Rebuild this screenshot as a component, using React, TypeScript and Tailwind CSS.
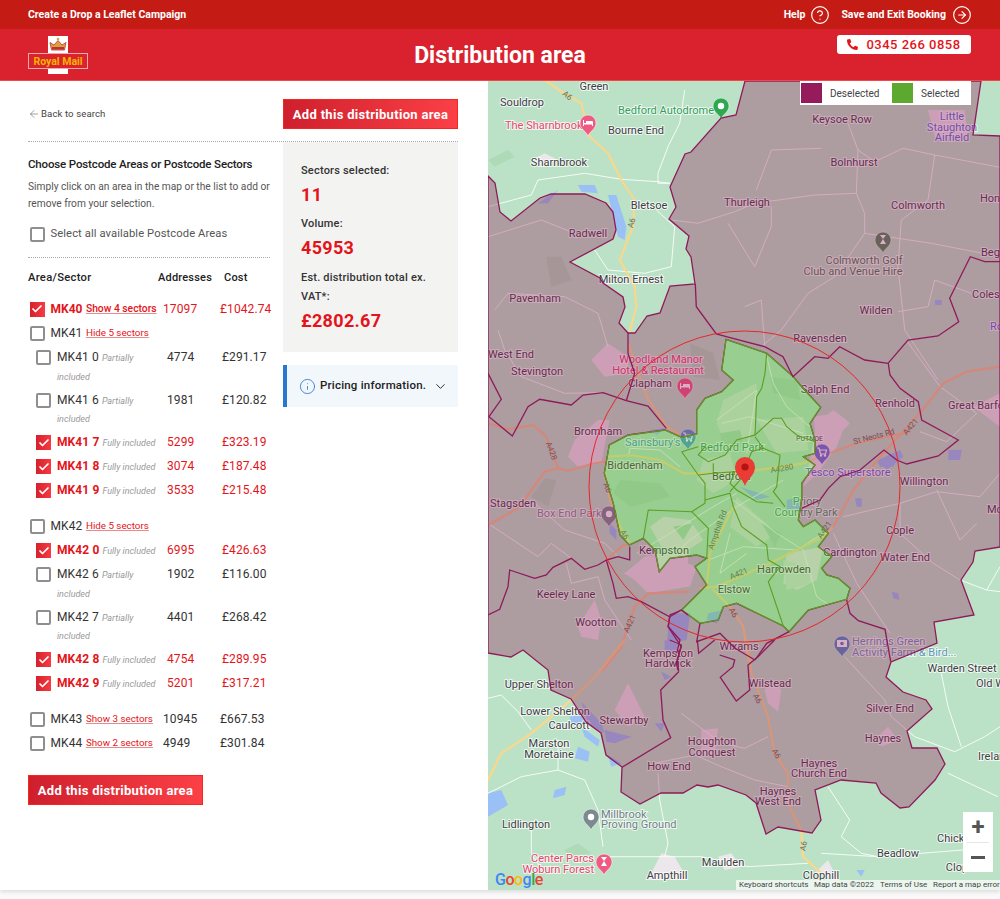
import React from "react";
import { ArrowLeft, Check, ChevronDown, CircleArrowRight, CircleHelp, Info } from "lucide-react";
import { FaPhoneAlt } from "react-icons/fa";

// map shapes were traced off crops at 3x, each crop has its own origin
type Origin = [number, number];
const Z5: Origin = [570, 320];
const Z6: Origin = [488, 80];
const Z7: Origin = [488, 640];
const Z9: Origin = [488, 330];
const Z10: Origin = [800, 300];

const pts = (o: Origin, s: string) =>
  s
    .trim()
    .split(/\s+/)
    .map((p) => {
      const [x, y] = p.split(",").map(Number);
      return `${(o[0] + x / 3).toFixed(1)},${(o[1] + y / 3).toFixed(1)}`;
    })
    .join(" ");

const path = (o: Origin, s: string) => "M" + pts(o, s).split(" ").join(" L");

const outerArea =
  "745,81 736,115 721,118 691,152 685,154 670,187 676,207 669,219 689,236 686,249 691,257 695,284 670,286 660,313 647,316 635,333 628,333 619,323 625,307 623,297 603,283 600,278 570,262 613,239 616,230 613,212 606,203 585,194 551,194 540,198 511,221 500,212 495,183 488,176 488,653 511,657 523,650 548,670 551,690 571,699 586,722 601,733 606,755 622,767 621,792 640,804 661,793 683,793 697,785 708,787 718,785 746,795 756,803 766,834 778,827 812,833 821,820 815,790 841,780 876,783 881,793 900,808 909,807 935,780 945,764 937,748 912,748 907,731 932,709 926,700 903,692 886,677 891,662 937,643 934,622 974,615 961,580 973,562 975,551 1000,547 1000,136 973,135 981,81";

const selectedArea = pts(
  Z5,
  "468,58 590,100 670,170 695,200 752,262 720,310 735,360 735,400 700,410 735,435 695,490 695,540 685,600 700,620 735,600 775,640 745,680 785,710 755,745 770,765 805,775 840,805 830,838 715,870 657,935 640,918 500,850 460,860 445,900 390,910 335,870 410,795 375,740 410,715 380,705 300,715 268,755 255,690 220,655 178,675 150,645 130,550 103,460 118,375 175,345 285,330 335,352 380,342 380,270 405,235 455,215 490,180 455,150"
);

const sectorLines = [
  "590,100 585,160 575,205 560,230 555,345 500,360 465,405 415,425 385,405 405,380",
  "555,345 610,295 635,295 650,320 680,345 735,365",
  "555,350 580,385 630,405 620,500 610,515 645,560",
  "335,395 385,465 405,490 405,550 365,575 235,570 220,655",
  "365,575 415,625 410,715",
  "335,395 385,380",
  "385,465 430,460 495,455 480,490 500,510 560,545 610,550",
  "430,430 430,460",
  "405,540 480,520 490,560 515,620 590,675 595,720 630,740 595,785 640,918",
  "480,515 510,480 545,395 580,385",
];

const districtLines: [Origin, string][] = [
  [Z6, "622,612 625,680 685,762 715,770 830,800 885,830 915,890 980,830 1020,835 1055,800 1130,840 1200,850 1260,780 1350,768 1412,725 1385,655 1447,530 1490,545 1536,545"],
  [Z10, "265,190 270,225 300,265 355,305 365,360 475,420 415,468 320,492 290,480 252,450 180,510 120,530 85,565 60,600 5,625"],
  [Z10, "140,900 150,940 175,962 255,988 272,1085"],
  [Z9, "0,130 40,208 3,260 73,318 120,230 155,208 250,225 285,195 345,188 415,212 480,228 535,295"],
  [Z9, "420,10 420,70 440,130 415,212"],
  [Z9, "425,650 425,690 390,680 355,690 330,705 290,718 250,685 195,712 175,735 140,745 65,720 60,770 35,838 0,855"],
  [Z9, "355,690 375,760 385,805 420,800 460,815 545,860 580,840 600,855"],
  [Z9, "545,860 540,890 580,950 565,1000 570,1020"],
  [Z7, "572,95 518,150 525,240 548,293 402,382"],
  [Z7, "572,95 568,60 580,15 545,0"],
  [Z7, "628,0 632,40 680,0"],
  [Z7, "695,45 740,60 735,80 697,112 745,183 785,150 780,75 810,50 860,0"],
  [Z5, "335,870 300,885 295,920 330,960 320,1000"],
  [Z5, "390,910 380,965 450,940 470,960 495,985 555,1020"],
  [Z5, "657,935 590,970 555,1020"],
];

const minorRoads: [Origin, string][] = [
  [Z6, "590,30 575,130 540,200 510,280 510,310 545,310"],
  [Z6, "290,280 400,298 510,305 545,310"],
  [Z6, "0,380 130,345 150,300 290,280"],
  [Z6, "320,510 360,570 470,580 550,560 560,440 505,390"],
  [Z6, "550,420 630,430 740,395 800,370 980,345 1105,340 1130,400 1130,460 1040,590 960,640 880,750 820,800"],
  [Z6, "1080,130 1110,210 1105,340"],
  [Z6, "1110,210 1160,245 1245,205 1340,225 1536,262"],
  [Z6, "805,330 850,210 1000,205"],
  [Z6, "850,380 850,440 800,560 720,430"],
  [Z6, "1340,225 1320,360 1240,420 1230,560 1250,750 1350,900"],
  [Z6, "1130,460 1330,490 1536,530"],
  [Z6, "1230,695 1320,680 1340,600 1450,640"],
  [Z6, "0,470 160,420 260,460"],
  [Z6, "20,690 60,640 230,650 330,700 360,800"],
  [Z6, "770,680 820,660 830,800"],
  [Z9, "30,0 50,60 100,140 230,190 345,188"],
  [Z9, "140,520 230,600 350,640 390,680"],
  [Z9, "0,580 150,680 190,640 250,685"],
  [Z9, "235,700 250,760 330,740 350,810 430,930"],
  [Z7, "0,175 40,165 90,215 130,270"],
  [Z7, "210,300 210,390 290,420 330,510 345,620"],
  [Z7, "0,460 100,410 210,390"],
  [Z7, "130,560 130,640 170,700"],
  [Z7, "350,650 450,650 640,650 780,680 960,670"],
  [Z7, "510,400 515,480 540,610 530,650"],
  [Z7, "580,220 700,310 770,325 840,290"],
  [Z7, "500,370 620,345 700,380 800,420 900,440"],
  [Z7, "1020,440 1085,540 1060,590 1120,640 1170,650"],
  [Z7, "1000,640 1170,650 1425,630"],
  [Z7, "1210,230 1280,290 1400,335 1490,290 1536,260"],
  [Z7, "1380,400 1530,470"],
  [Z7, "1360,100 1380,200 1420,320"],
  [Z7, "1070,50 1190,180 1210,230"],
  [Z10, "480,840 560,870 600,875"],
  [Z10, "560,870 600,800"],
  [Z10, "300,610 410,575 540,590 600,520"],
  [Z10, "130,650 300,610"],
  [Z10, "100,700 170,850 270,1000"],
  [Z10, "300,610 300,700 400,790 480,840"],
  [Z10, "320,122 420,260 530,340 440,425 360,395"],
  [Z10, "410,570 480,720 530,670"],
  [Z5, "200,700 300,640 430,560 500,520"],
  [Z5, "300,715 360,660 500,560 640,480"],
  [Z5, "415,720 520,680 680,690 760,640"],
  [Z5, "490,540 620,640 700,690 740,830 770,850"],
  [Z5, "455,310 540,290 700,340"],
  [Z5, "590,110 610,190 650,260 720,320"],
  [Z5, "440,300 560,210 530,400"],
  [Z5, "480,640 450,760 530,700"],
  [Z5, "175,410 180,385 270,390 330,440"],
];

const majorRoads: [string, Origin, string][] = [
  ["#fbd78a", Z6, "170,0 220,35 280,70 305,170 360,220 400,300 440,360 435,440 395,540 440,620 445,680 425,755"],
  ["#fbd78a", Z5, "175,70 230,230 290,320 340,350"],
  ["#f7c28a", Z9, "0,280 60,298 135,285 175,320 210,415 240,422 310,402 365,392"],
  ["#f7c28a", Z9, "210,415 170,425 120,495 90,535 0,585"],
  ["#fbe08c", Z5, "118,410 180,405 270,420 340,460 500,460 700,430 750,410"],
  ["#f7c28a", Z5, "750,410 860,370 1020,335"],
  ["#fbe08c", Z5, "105,455 120,540 150,620 178,670"],
  ["#f7c28a", Z9, "345,1020 400,950 440,830 480,790 600,785"],
  ["#fbe08c", Z5, "390,805 440,800 600,730 760,650 790,620"],
  ["#f7c28a", Z10, "100,680 160,570 250,460 360,340 430,250 500,215 600,200"],
  ["#fbe08c", Z5, "430,810 480,860 520,920 535,1020"],
  ["#fbd78a", Z7, "780,0 790,100 840,230 860,340 900,400 900,490 940,570 945,650 1000,700"],
  ["#fbd78a", Z7, "0,420 40,340 130,280 250,180 330,100 410,0"],
  ["#fbe08c", Z5, "410,800 420,700 490,560"],
  ["#f7c28a", Z9, "355,690 400,650 425,640"],
];

const urban: [Origin, string][] = [
  [Z9, "410,730 470,680 600,660 600,770 480,790 440,750"],
  [Z9, "240,380 260,330 330,270 365,270 340,400 270,410"],
  [Z9, "310,90 360,40 420,80 420,130 350,140"],
  [Z9, "270,890 320,810 340,870 330,930 280,920"],
  [Z5, "700,500 720,420 740,310 790,270 830,300 800,380 750,450"],
  [Z5, "240,620 280,590 360,600 400,660 340,700 280,690"],
  [Z5, "650,700 760,680 740,780 680,810 640,790"],
  [Z5, "160,760 300,710 380,740 360,800 240,790"],
  [Z6, "1320,90 1430,90 1440,170 1340,170"],
  [Z6, "130,240 170,220 210,240 160,260"],
  [Z10, "40,350 110,340 150,370 100,420 50,420"],
  [Z10, "520,320 600,280 600,380 560,350"],
  [Z7, "420,130 450,190 470,230 420,260 380,210"],
  [Z7, "640,270 690,265 680,350 640,340"],
  [Z7, "830,150 850,120 880,150 870,215 840,190"],
  [Z7, "1170,290 1200,260 1230,300 1180,320"],
  [Z7, "480,720 520,640 560,650 600,720"],
  [Z7, "690,650 730,640 760,680 710,690"],
  [Z7, "980,700 1020,660 1050,720"],
];

// paler ground inside the selected sectors, town showing through
const townInSelection: [Origin, string][] = [
  [Z5, "460,240 560,190 555,340 470,380 440,310"],
  [Z5, "400,420 480,400 500,480 430,520 380,480"],
  [Z5, "500,530 620,640 560,680 480,620"],
  [Z5, "560,300 700,290 715,390 620,400"],
  [Z5, "640,720 720,740 720,790 650,810"],
];

const darkPatches: [Origin, string][] = [
  [Z9, "130,500 170,445 205,450 180,530"],
  [Z5, "150,480 270,490 300,530 180,560 130,520"],
  [Z5, "450,340 510,330 520,370 460,390"],
  [Z5, "600,170 680,180 690,240 610,220"],
  [Z5, "310,620 370,610 340,660"],
  [Z5, "575,610 635,640 615,680"],
  [Z5, "360,70 430,100 450,180 370,170"],
  [Z6, "175,530 220,530 250,600 190,620"],
  [Z6, "0,240 60,210 80,230 20,260"],
  [Z7, "230,630 270,610 310,640 240,650"],
];

const water: [Origin, string][] = [
  [Z6, "270,315 320,315 330,340 280,335"],
  [Z6, "360,345 385,345 415,440 410,480 390,470"],
  [Z6, "150,370 210,330 180,370"],
  [Z7, "245,230 280,225 290,250 250,250"],
  [Z7, "280,260 335,300 330,320 290,290"],
  [Z7, "270,320 305,335 300,365 260,355"],
  [Z7, "280,185 340,250 350,280 300,250"],
  [Z7, "350,270 430,290 380,310 355,305"],
  [Z7, "360,345 400,370 370,380"],
  [Z7, "520,95 550,110 530,120"],
  [Z7, "500,250 530,250 520,275"],
  [Z7, "530,0 575,15 560,40 530,30"],
  [Z7, "0,460 40,450 60,495 0,530"],
  [Z7, "200,450 235,440 230,465 195,475"],
  [Z7, "1105,690 1130,690 1120,710"],
  [Z10, "235,480 300,450 310,470 260,510"],
  [Z10, "445,450 485,450 480,480 445,480"],
  [Z10, "275,875 295,880 298,900 280,895"],
  [Z10, "165,595 185,595 185,620 170,620"],
  [Z10, "405,0 425,0 425,15 405,15"],
  [Z9, "365,580 385,600 385,630 365,610"],
  [Z5, "650,540 690,530 690,580 650,570"],
  [Z5, "510,500 600,530 560,540"],
  [Z5, "240,330 285,325 260,345"],
  [Z5, "415,880 460,870 440,910 410,900"],
  [Z5, "920,420 980,420 970,440 930,440"],
  [Z5, "300,880 360,880 350,960 290,970"],
];

type Lbl = [string, number, number, string?, ("start" | "end" | "middle")?, number?];
const INK = "#3c4043";
const PINK = "#e8456d";
const BLUE = "#5b6bd6";
const GRN = "#2f9e58";
const labels: Lbl[] = [
  ["Green", 594, 86],
  ["Souldrop", 522, 102],
  ["The Sharnbrook", 505, 125, PINK, "start"],
  ["Bedford Autodrome", 618, 110, GRN, "start"],
  ["Bourne End", 636, 130],
  ["Sharnbrook", 559, 162],
  ["Bletsoe", 649, 205],
  ["Thurleigh", 747, 202],
  ["Keysoe Row", 842, 119],
  ["Bolnhurst", 854, 162],
  ["Colmworth", 918, 205],
  ["Little", 952, 116, BLUE],
  ["Staughton", 952, 127, BLUE],
  ["Airfield", 952, 137, BLUE],
  ["Hon", 980, 198, INK, "start"],
  ["Begw", 981, 252, INK, "start"],
  ["Colesd", 972, 294, INK, "start"],
  ["Ro", 990, 326, BLUE, "start"],
  ["Radwell", 588, 233],
  ["Milton Ernest", 631, 279],
  ["Pavenham", 535, 298],
  ["Colmworth Golf", 864, 260, "#3f7d4e"],
  ["Club and Venue Hire", 853, 271, "#3f7d4e"],
  ["Wilden", 876, 310],
  ["Ravensden", 820, 338],
  ["West End", 488, 354, INK, "start"],
  ["Stevington", 537, 371],
  ["Woodland Manor", 661, 359, PINK],
  ["Hotel & Restaurant", 658, 370, PINK],
  ["Clapham", 650, 383],
  ["Salph End", 825, 389],
  ["Renhold", 895, 403],
  ["Great Barfo", 948, 405, INK, "start"],
  ["Bromham", 598, 431],
  ["Sainsbury's", 625, 442, "#3b9cba", "start"],
  ["Bedford Park", 732, 447, GRN, "middle"],
  ["PUTNOE", 796, 439, INK, "start", 7],
  ["Biddenham", 635, 465, INK],
  ["Bedford", 712, 476, INK, "start"],
  ["Tesco Superstore", 805, 472, BLUE, "start"],
  ["Willington", 924, 481],
  ["Mo", 987, 509, INK, "start"],
  ["Stagsden", 513, 503],
  ["Box End Park", 537, 513, "#7d8a8d", "start"],
  ["Priory", 807, 501, GRN],
  ["Country Park", 806, 512, GRN, "middle"],
  ["Cople", 900, 530],
  ["Cardington", 850, 552],
  ["Water End", 905, 557],
  ["Kempston", 664, 550],
  ["Harrowden", 784, 569, INK],
  ["Elstow", 734, 589, INK],
  ["Keeley Lane", 566, 594],
  ["Wootton", 596, 622],
  ["Herrings Green", 852, 641, "#5f96b5", "start"],
  ["Activity Farm & Bird...", 852, 652, "#5f96b5", "start"],
  ["Wixams", 739, 646],
  ["Kempston", 668, 653],
  ["Hardwick", 668, 663],
  ["Warden Street", 962, 668],
  ["Old W", 976, 683, INK, "start"],
  ["Upper Shelton", 539, 684],
  ["Wilstead", 770, 683],
  ["Silver End", 890, 708],
  ["Lower Shelton", 555, 711],
  ["Stewartby", 624, 720],
  ["Caulcott", 569, 725],
  ["Haynes", 883, 738],
  ["Marston", 549, 743],
  ["Moretaine", 549, 754],
  ["Houghton", 712, 741],
  ["Conquest", 712, 752],
  ["How End", 669, 766],
  ["Haynes", 819, 763],
  ["Church End", 819, 773],
  ["Irelan", 978, 756, INK, "start"],
  ["Haynes", 778, 791],
  ["West End", 778, 801],
  ["Lidlington", 526, 824],
  ["Millbrook", 601, 814, "#6f7f85", "start"],
  ["Proving Ground", 601, 824, "#6f7f85", "start"],
  ["Chick", 937, 838, INK, "start"],
  ["Beadlow", 898, 853],
  ["Center Parcs", 594, 858, PINK, "end"],
  ["Woburn Forest", 594, 869, PINK, "end"],
  ["Maulden", 723, 862],
  ["Ampthill", 667, 875],
  ["Clophill", 821, 875],
  ["Clop", 957, 867, INK, "middle"],
];

const roadShields: [string, number, number, number][] = [
  ["A6", 567, 96, 40],
  ["A6", 632, 223, -75],
  ["A428", 551, 451, 70],
  ["A6", 607, 488, 70],
  ["A6", 624, 535, 60],
  ["A421", 630, 624, -65],
  ["Ampthill Rd", 718, 530, -70],
  ["A421", 739, 574, -22],
  ["A6", 733, 613, 60],
  ["A4280", 782, 469, -10],
  ["A421", 825, 530, -55],
  ["St Neots Rd", 874, 437, -14],
  ["A421", 911, 427, -50],
  ["A6", 757, 699, 60],
  ["A6", 776, 754, 60],
  ["A6", 804, 846, -80],
];

const Pin = ({ x, y, color, glyph }: { x: number; y: number; color: string; glyph?: "bed" | "cart" | "camera" | "flag" }) => (
  <g transform={`translate(${x} ${y})`}>
    <path d="M0 0C-2-5-8-7-8-13A8 8 0 1 1 8-13C8-7 2-5 0 0Z" fill={color} stroke="#fff" strokeWidth="0.5" />
    {glyph === "bed" && <path d="M-5-10V-16H-4V-13H-2V-15H4Q5-15 5-14V-10H4V-11.500H-4V-10Z" fill="#fff" />}
    {glyph === "cart" && (
      <g fill="none" stroke="#fff" strokeWidth="1.2">
        <path d="M-5-17H-3L-1.500-11H3.500L4.500-15H-2.500" />
        <circle cx="-1" cy="-9.500" r="0.6" />
        <circle cx="3" cy="-9.500" r="0.6" />
      </g>
    )}
    {glyph === "camera" && (
      <g fill="#fff">
        <path d="M-5-17H5V-10H-5Z" />
        <circle cx="0" cy="-13.500" r="1.800" fill={color} />
      </g>
    )}
    {glyph === "flag" && <path d="M-3-18H3L0-14 3-9H-3L0-14Z" fill="#fff" />}
    {!glyph && <circle cx="0" cy="-13" r="3.2" fill="#fff" />}
  </g>
);

const MapDrawing = () => (
  <svg viewBox="488 81 512 809" className="block w-full h-full font-[family-name:Roboto,sans-serif]">
    <rect x="488" y="81" width="512" height="809" fill="#bbe2c6" />
    {urban.map(([o, s], i) => (
      <polygon key={i} points={pts(o, s)} fill="#ebe7ea" />
    ))}
    {townInSelection.map(([o, s], i) => (
      <polygon key={i} points={pts(o, s)} fill="#d6e8d8" />
    ))}
    {darkPatches.map(([o, s], i) => (
      <polygon key={i} points={pts(o, s)} fill="#aedab8" />
    ))}
    {water.map(([o, s], i) => (
      <polygon key={i} points={pts(o, s)} fill="#9ac0f5" />
    ))}
    <g fill="none" stroke="#fff" strokeWidth="1" strokeOpacity="0.85" strokeLinejoin="round">
      {minorRoads.map(([o, s], i) => (
        <path key={i} d={path(o, s)} />
      ))}
    </g>
    <g fill="none" strokeWidth="2.2" strokeLinejoin="round" strokeLinecap="round">
      {majorRoads.map(([c, o, s], i) => (
        <path key={i} d={path(o, s)} stroke={c} />
      ))}
    </g>
    {roadShields.map(([t, x, y, r], i) => (
      <text
        key={i}
        x={x}
        y={y}
        fontSize="8"
        fill="#6b6b55"
        textAnchor="middle"
        dominantBaseline="middle"
        transform={`rotate(${r} ${x} ${y})`}
      >
        {t}
      </text>
    ))}
    {labels.map(([t, x, y, c, a, size], i) => (
      <text
        key={i}
        x={x}
        y={y}
        dy="0.35em"
        fontSize={size ?? 11}
        textAnchor={a ?? "middle"}
        fill={c ?? INK}
        stroke="#fff"
        strokeOpacity="0.75"
        strokeWidth="2"
        paintOrder="stroke"
      >
        {t}
      </text>
    ))}
    <Pin x={588} y={136} color="#ee5a82" glyph="bed" />
    <Pin x={721} y={119} color="#2fa84f" />
    <Pin x={883} y={253} color="#4f8a5d" glyph="flag" />
    <Pin x={685} y={399} color="#ee5a82" glyph="bed" />
    <Pin x={688} y={450} color="#4d9fd0" glyph="cart" />
    <Pin x={822} y={465} color="#6a75d8" glyph="cart" />
    <Pin x={609} y={527} color="#7c8a90" />
    <Pin x={842} y={657} color="#4d8fc0" glyph="camera" />
    <Pin x={591} y={830} color="#7c8a90" />
    <Pin x={604} y={875} color="#ee5a82" glyph="flag" />
    {/* district overlays sit above the labels, which is why they dim */}
    <path
      d={`M${outerArea.split(" ").join(" L")} Z M${selectedArea.split(" ").join(" L")} Z`}
      fillRule="evenodd"
      fill="#961b5a"
      fillOpacity="0.35"
      stroke="#8f1a5a"
      strokeWidth="1.3"
    />
    <polygon points={selectedArea} fill="#5da82f" fillOpacity="0.35" stroke="#5c9f22" strokeWidth="1.1" />
    <g fill="none" stroke="#8f1a5a" strokeWidth="1.3">
      {districtLines.map(([o, s], i) => (
        <path key={i} d={path(o, s)} />
      ))}
    </g>
    <g fill="none" stroke="#5c9f22" strokeWidth="1.1">
      {sectorLines.map((s, i) => (
        <path key={i} d={path(Z5, s)} />
      ))}
    </g>
    <circle cx="744.5" cy="486.5" r="155.5" fill="none" stroke="#e8262a" strokeWidth="1" />
    <g transform="translate(745 486)">
      <path d="M0 0C-2-7-10-10-10-19A10 10 0 1 1 10-19C10-10 2-7 0 0Z" fill="#ea3b35" />
      <circle cx="0" cy="-19" r="3.6" fill="#b31412" />
    </g>
  </svg>
);

const Legend = () => (
  <div className="absolute top-0 left-[312px] w-[171px] h-[24px] bg-white flex items-center pl-[1px] text-[10px] text-[#444]">
    <div className="w-[21px] h-[20px] bg-[#961b5a] border border-[#8f1a5a]" />
    <span className="ml-[8px] w-[62px]">Deselected</span>
    <div className="w-[21px] h-[20px] bg-[#5da82f]" />
    <span className="ml-[8px]">Selected</span>
  </div>
);

const Checkbox = ({ checked }: { checked?: boolean }) =>
  checked ? (
    <span className="w-[15px] h-[15px] shrink-0 bg-gradient-to-r from-[#d3212c] to-[#f93a42] grid place-items-center">
      <Check size={12} strokeWidth={3.5} className="text-white" />
    </span>
  ) : (
    <span className="block w-[15px] h-[15px] shrink-0 bg-white border-2 border-[#8f8f8f] rounded-[2px]" />
  );

const AreaRow = (props: { code: string; link: string; addresses?: string; cost?: string; checked?: boolean }) => {
  const tone = props.checked ? "text-[#e3141a]" : "text-[#333]";
  return (
    <div className={`flex items-center h-[24px] text-[12px] tracking-[0.1px] ${tone}`}>
      <div className="w-[135px] shrink-0 flex items-center pl-[1.5px] whitespace-nowrap">
        <Checkbox checked={props.checked} />
        <span className={`ml-[6px] ${props.checked ? "font-bold tracking-normal" : ""}`}>{props.code}</span>
        <a
          className={`ml-[3.5px] tracking-normal text-[#e3141a] underline decoration-[#eb8a8a] ${
            props.checked ? "font-medium text-[10.3px]" : "text-[9.8px]"
          }`}
        >
          {props.link}
        </a>
      </div>
      <div className="w-[57px] shrink-0">{props.addresses}</div>
      <div>{props.cost}</div>
    </div>
  );
};

const SectorRow = (props: { code: string; addresses: string; cost: string; checked?: boolean }) => {
  const tone = props.checked ? "text-[#e3141a]" : "text-[#333]";
  return (
    <div className={`flex items-start pt-[3px] pb-[2.5px] text-[12px] tracking-[0.1px] ${tone}`}>
      <div className="w-[8px] shrink-0" />
      <div className="pt-[2px] mr-[6px] shrink-0">
        <Checkbox checked={props.checked} />
      </div>
      <div className="w-[101px] shrink-0 leading-[18.5px] mr-[9px]">
        <span className={props.checked ? "font-bold" : ""}>{props.code}</span>{" "}
        <i className="text-[9px] leading-none tracking-normal text-[#999]">
          {props.checked ? "Fully included" : "Partially included"}
        </i>
      </div>
      <div className="w-[55px] shrink-0 leading-[18.5px]">{props.addresses}</div>
      <div className="leading-[18.5px]">{props.cost}</div>
    </div>
  );
};

const AddButton = ({ className }: { className?: string }) => (
  <button className={`h-[30px] w-[175px] pt-[1px] bg-gradient-to-r from-[#cf1f2d] to-[#fb3f46] border border-[#f5261c] text-white text-[13px] font-bold tracking-[0.3px] ${className ?? ""}`}>
    Add this distribution area
  </button>
);

const StatBlock = ({ label, value }: { label: React.ReactNode; value: string }) => (
  <div>
    <div className="text-[11px] leading-[19px] font-medium tracking-[0.2px] text-[#333]">{label}</div>
    <div className="text-[18px] leading-[29px] font-bold text-[#e3141a] tracking-[0.3px]">{value}</div>
  </div>
);

const App = () => {
  return (
    <div className="w-[1000px] h-[899px] overflow-hidden bg-[#fafafa] font-[family-name:Roboto,sans-serif]">
      <div className="h-[29px] bg-[#c41c14] flex items-center pr-[28px] pl-[28px] text-white text-[10.5px] font-bold">
        <span>Create a Drop a Leaflet Campaign</span>
        <div className="ml-auto flex items-center">
          <span>Help</span>
          <CircleHelp size={20} strokeWidth={1.4} className="ml-[5px]" />
          <span className="ml-[11px]">Save and Exit Booking</span>
          <CircleArrowRight size={20} strokeWidth={1.4} className="ml-[6px]" />
        </div>
      </div>
      <div className="h-[52px] bg-[#da222e] border-b border-[#ef4a4a] relative flex items-center justify-center">
        <svg viewBox="0 0 60 38" className="absolute left-[28px] top-[7px] w-[60px] h-[38px]">
          <rect x="20" y="0" width="20" height="38" fill="#fff" />
          <path d="M23.500 14L22 6.500 26 9 30 4.500 34 9 38 6.500 36.500 14Z" fill="#d8a33a" stroke="#c0303a" strokeWidth="0.8" />
          <circle cx="30" cy="3" r="1.300" fill="#d8a33a" />
          <rect x="24" y="11" width="12" height="2.500" fill="#c0303a" />
          <rect x="0.5" y="17.5" width="59" height="15" fill="#d9232e" stroke="#f3a9a9" strokeWidth="1" />
          <text x="30" y="28.5" textAnchor="middle" fontSize="10.5" fontWeight="700" fill="#f6b400">
            Royal Mail
          </text>
        </svg>
        <h1 className="text-white text-[23px] font-bold pt-[3px]">Distribution area</h1>
        <div className="absolute left-[837px] top-[6px] w-[134px] h-[19px] bg-white rounded-[3px] flex items-center justify-center text-[#e3141a] text-[13px] font-medium tracking-[0.5px]">
          <FaPhoneAlt size={11} className="mr-[8px]" />
          0345 266 0858
        </div>
      </div>

      <div className="flex h-[809px] shadow-[0_2px_4px_rgba(0,0,0,0.12)]">
        <div className="w-[488px] bg-white pl-[28px]">
          <div className="w-[430px] h-[61px] flex items-center justify-between pt-[6px] border-b border-dotted border-[#aaa]">
            <a className="flex items-center text-[9.6px] tracking-[0.1px] text-[#444]">
              <ArrowLeft size={12} strokeWidth={1} className="mr-[1px]" />
              Back to search
            </a>
            <AddButton />
          </div>
          <div className="flex w-[430px]">
            <div className="w-[242px]">
              <h2 className="text-[11.5px] font-medium text-[#222] tracking-[-0.15px] mt-[14px] leading-[16px] whitespace-nowrap">
                Choose Postcode Areas or Postcode Sectors
              </h2>
              <p className="w-[250px] text-[10.2px] leading-[17px] text-[#555] mt-[6px]">
                Simply click on an area in the map or the list to add or remove from your selection.
              </p>
              <label className="flex items-center h-[24px] mt-[10px] pl-[1.5px] text-[11.2px] text-[#555] tracking-[0.1px]">
                <Checkbox />
                <span className="ml-[6px]">Select all available Postcode Areas</span>
              </label>
              <div className="border-b border-dotted border-[#aaa] mt-[11px]" />
              <div className="flex h-[41px] items-center text-[11px] font-medium text-[#222] tracking-[0.2px]">
                <span className="w-[130px] text-[11.2px] tracking-[0.3px]">Area/Sector</span>
                <span className="w-[66px]">Addresses</span>
                <span>Cost</span>
              </div>
              <div className="mt-[-2px]">
                <AreaRow code="MK40" link="Show 4 sectors" addresses="17097" cost="£1042.74" checked />
                <AreaRow code="MK41" link="Hide 5 sectors" />
                <SectorRow code="MK41 0" addresses="4774" cost="£291.17" />
                <SectorRow code="MK41 6" addresses="1981" cost="£120.82" />
                <SectorRow code="MK41 7" addresses="5299" cost="£323.19" checked />
                <SectorRow code="MK41 8" addresses="3074" cost="£187.48" checked />
                <SectorRow code="MK41 9" addresses="3533" cost="£215.48" checked />
                <div className="h-[12px]" />
                <AreaRow code="MK42" link="Hide 5 sectors" />
                <SectorRow code="MK42 0" addresses="6995" cost="£426.63" checked />
                <SectorRow code="MK42 6" addresses="1902" cost="£116.00" />
                <SectorRow code="MK42 7" addresses="4401" cost="£268.42" />
                <SectorRow code="MK42 8" addresses="4754" cost="£289.95" checked />
                <SectorRow code="MK42 9" addresses="5201" cost="£317.21" checked />
                <div className="h-[12px]" />
                <AreaRow code="MK43" link="Show 3 sectors" addresses="10945" cost="£667.53" />
                <AreaRow code="MK44" link="Show 2 sectors" addresses="4949" cost="£301.84" />
              </div>
              <AddButton className="mt-[20px]" />
            </div>
            <div className="w-[175px] ml-[13px]">
              <div className="h-[210px] bg-[#f3f3f2] pl-[18px] pr-[10px] pt-[18.5px] flex flex-col gap-[5.5px]">
                <StatBlock label="Sectors selected:" value="11" />
                <StatBlock label="Volume:" value="45953" />
                <StatBlock label="Est. distribution total ex. VAT*:" value="£2802.67" />
              </div>
              <div className="mt-[13px] h-[42px] bg-[#f2f7fc] border-l-[4px] border-[#2a77d0] flex items-center pl-[12px] text-[11.5px] font-medium text-[#222] tracking-[0.2px]">
                <Info size={17} strokeWidth={1.2} className="text-[#2a77d0] mr-[4px]" />
                Pricing information.
                <ChevronDown size={15} strokeWidth={1.5} className="ml-[7px]" />
              </div>
            </div>
          </div>
        </div>

        <div className="relative w-[512px] h-[809px] overflow-hidden">
          <MapDrawing />
          <Legend />
          <div className="absolute left-[7px] bottom-[2px] text-[16px] font-medium leading-none tracking-[-0.5px]">
            <span className="text-[#4285f4]">G</span>
            <span className="text-[#ea4335]">o</span>
            <span className="text-[#fbbc05]">o</span>
            <span className="text-[#4285f4]">g</span>
            <span className="text-[#34a853]">l</span>
            <span className="text-[#ea4335]">e</span>
          </div>
          <div className="absolute right-0 bottom-0 w-[264px] h-[10px] bg-white/70 flex items-center pl-[3px] text-[8px] text-[#444]">
            <span className="w-[75px]">Keyboard shortcuts</span>
            <span className="w-[66px]">Map data ©2022</span>
            <span className="w-[53px]">Terms of Use</span>
            <span>Report a map error</span>
          </div>
          <div className="absolute right-[7px] bottom-[18px] w-[30px] h-[60px] bg-white flex flex-col items-center text-[#555]">
            <div className="h-[30px] flex items-center justify-center text-[24px] font-bold leading-none">+</div>
            <div className="w-[22px] border-t border-[#e6e6e6]" />
            <div className="flex-1 flex items-center justify-center">
              <div className="w-[14px] h-[3px] bg-[#555]" />
            </div>
          </div>
        </div>
      </div>
    </div>
  );
};

export default App;
